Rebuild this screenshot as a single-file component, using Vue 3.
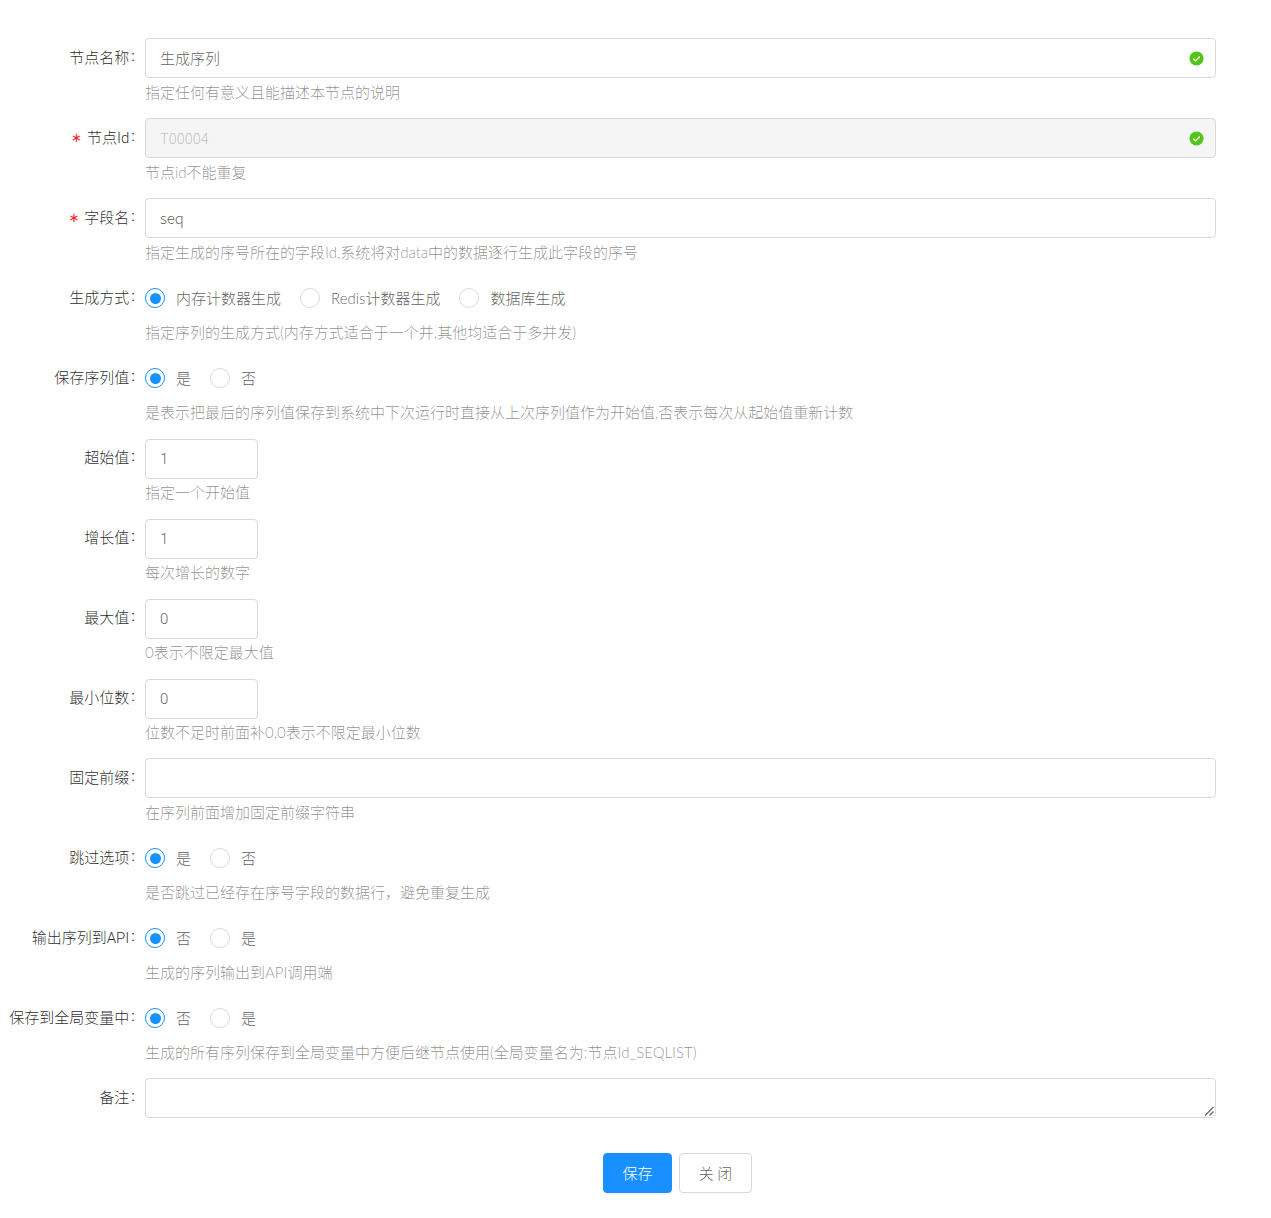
<script setup>
const rows = [
  { label: '节点名称', type: 'input', value: '生成序列', help: '指定任何有意义且能描述本节点的说明', ok: true },
  { label: '节点Id', required: true, type: 'input', value: 'T00004', disabled: true, help: '节点id不能重复', ok: true },
  { label: '字段名', required: true, type: 'input', value: 'seq', help: '指定生成的序号所在的字段Id,系统将对data中的数据逐行生成此字段的序号' },
  { label: '生成方式', type: 'radio', options: ['内存计数器生成', 'Redis计数器生成', '数据库生成'], help: '指定序列的生成方式(内存方式适合于一个并,其他均适合于多并发)' },
  { label: '保存序列值', type: 'radio', options: ['是', '否'], help: '是表示把最后的序列值保存到系统中下次运行时直接从上次序列值作为开始值,否表示每次从起始值重新计数' },
  { label: '超始值', type: 'number', value: '1', help: '指定一个开始值' },
  { label: '增长值', type: 'number', value: '1', help: '每次增长的数字' },
  { label: '最大值', type: 'number', value: '0', help: '0表示不限定最大值' },
  { label: '最小位数', type: 'number', value: '0', help: '位数不足时前面补0,0表示不限定最小位数' },
  { label: '固定前缀', type: 'input', value: '', help: '在序列前面增加固定前缀字符串' },
  { label: '跳过选项', type: 'radio', options: ['是', '否'], help: '是否跳过已经存在序号字段的数据行，避免重复生成' },
  { label: '输出序列到API', type: 'radio', options: ['否', '是'], help: '生成的序列输出到API调用端' },
  { label: '保存到全局变量中', type: 'radio', options: ['否', '是'], help: '生成的所有序列保存到全局变量中方便后继节点使用(全局变量名为:节点Id_SEQLIST)' },
  { label: '备注', type: 'textarea' },
]
</script>

<template>
  <form class="form" @submit.prevent>
    <div v-for="row in rows" :key="row.label" class="row">
      <label class="label">
        <span v-if="row.required" class="star">∗</span>{{ row.label }}<span class="colon">:</span>
      </label>
      <div class="body">
        <div class="control">
          <template v-if="row.type === 'input'">
            <input class="input text" :class="{ disabled: row.disabled, feedback: row.ok }" :value="row.value" :disabled="row.disabled" />
            <svg v-if="row.ok" class="check" viewBox="0 0 16 16" aria-hidden="true">
              <circle cx="8" cy="8" r="7.5" fill="#52c41a" />
              <path d="M4.6 8.2 7 10.5 11.4 5.9" fill="none" stroke="#fff" stroke-width="1.4" />
            </svg>
          </template>
          <input v-else-if="row.type === 'number'" class="input number" :value="row.value" />
          <template v-else-if="row.type === 'textarea'">
            <textarea class="input area"></textarea>
            <svg class="grip" viewBox="0 0 10 10" aria-hidden="true">
              <path d="M1 9.5 9.5 1M5.5 9.5 9.5 5.5" fill="none" stroke="#666" stroke-width="1.2" />
            </svg>
          </template>
          <div v-else class="radios">
            <label v-for="(opt, i) in row.options" :key="opt" class="radio">
              <span class="circle" :class="{ on: i === 0 }"></span>
              <span class="opt">{{ opt }}</span>
            </label>
          </div>
        </div>
        <div v-if="row.help" class="help">{{ row.help }}</div>
      </div>
    </div>
    <div class="footer">
      <button type="submit" class="btn primary">保存</button>
      <button type="button" class="btn">关 闭</button>
    </div>
  </form>
</template>

<style scoped>
.form {
  width: 1271px;
  box-sizing: border-box;
  padding: 38px 55px 25px 0;
  font-family: Roboto, "Noto Sans CJK SC", "Noto Sans", sans-serif;
  font-size: 15px;
  font-weight: 300;
  color: rgba(0, 0, 0, 0.65);
}
.row {
  display: grid;
  grid-template-columns: 145px 1fr;
  margin-bottom: 12px;
}
.label {
  display: flex;
  justify-content: flex-end;
  align-items: center;
  height: 36px;
  padding-bottom: 4px;
  color: rgba(0, 0, 0, 0.85);
  white-space: nowrap;
}
.star {
  color: #f5222d;
  margin: 3px 5px 0 0;
  font-family: "DejaVu Sans", sans-serif;
  font-size: 13px;
  font-weight: 400;
}
.colon {
  margin: 0 10px 0 2px;
  font-weight: 400;
}
.control {
  position: relative;
  display: flow-root;
  height: 40px;
}
.input {
  display: block;
  box-sizing: border-box;
  width: 100%;
  height: 40px;
  padding: 5px 14px;
  border: 1px solid #d9d9d9;
  border-radius: 4px;
  background: #fff;
  font: inherit;
  color: rgba(0, 0, 0, 0.65);
  outline: none;
}
.text {
  padding: 5px 14px 6px;
  font-family: "Noto Sans CJK SC", "Noto Sans", sans-serif;
}
.input.feedback {
  padding-right: 40px;
}
.input.disabled {
  background: #f5f5f5;
  color: rgba(0, 0, 0, 0.25);
}
.number {
  width: 113px;
  margin-top: 1px;
}
.area {
  resize: none;
}
.grip {
  position: absolute;
  right: 2px;
  bottom: 2px;
  width: 10px;
  height: 10px;
  pointer-events: none;
}
.check {
  position: absolute;
  right: 12px;
  top: 13px;
  width: 15px;
  height: 15px;
}
.radios {
  display: flex;
  align-items: center;
  height: 40px;
  gap: 19px;
}
.radio {
  display: flex;
  align-items: center;
  gap: 11px;
}
.opt {
  margin-top: -1px;
  font-family: Lato, "Noto Sans CJK SC", sans-serif;
}
.circle {
  box-sizing: border-box;
  position: relative;
  width: 20px;
  height: 20px;
  border: 1px solid #d9d9d9;
  border-radius: 50%;
  background: #fff;
}
.circle.on {
  border-color: #1890ff;
}
.circle.on::after {
  content: "";
  position: absolute;
  left: 3.5px;
  top: 3.5px;
  width: 11px;
  height: 11px;
  border-radius: 50%;
  background: #1890ff;
}
.help {
  height: 28px;
  line-height: 28px;
  color: rgba(0, 0, 0, 0.45);
  white-space: nowrap;
  font-family: Lato, "Noto Sans CJK SC", sans-serif;
}
.footer {
  display: flex;
  justify-content: center;
  gap: 7px;
  margin-top: 35px;
  padding-left: 139px;
}
.btn {
  box-sizing: border-box;
  height: 40px;
  width: 73px;
  padding: 0 0 2px;
  border: 1px solid #d9d9d9;
  border-radius: 4px;
  background: #fff;
  font: inherit;
  color: rgba(0, 0, 0, 0.65);
  box-shadow: 0 2px 0 rgba(0, 0, 0, 0.015);
}
.btn.primary {
  width: 69px;
  background: #1890ff;
  border-color: #1890ff;
  color: #fff;
  box-shadow: 0 2px 0 rgba(0, 0, 0, 0.045);
}
</style>
